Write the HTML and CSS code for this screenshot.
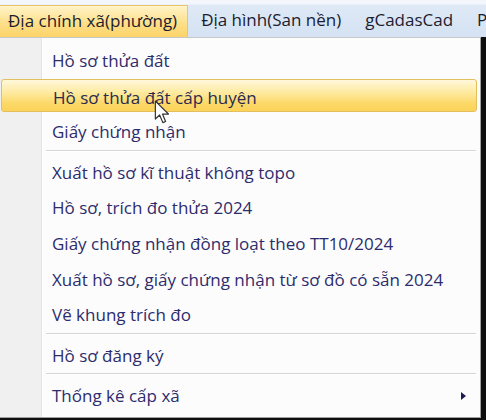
FILE: index.html
```html
<!DOCTYPE html>
<html lang="vi">
<head>
    <meta charset="UTF-8">
    <title>Menu Địa chính xã</title>
    <link rel="stylesheet" href="styles.css">
</head>
<body>
    <div class="menubar">
        <span class="bar-item open">Địa chính xã(phường)</span>
        <span class="bar-item">Địa hình(San nền)</span>
        <span class="bar-item">gCadasCad</span>
        <span class="bar-item">P</span>
    </div>

    <div class="dropdown">
        <ul class="menu">
            <li class="item">Hồ sơ thửa đất</li>
            <li class="item hover">Hồ sơ thửa đất cấp huyện</li>
            <li class="item">Giấy chứng nhận</li>
            <li class="sep"></li>
            <li class="item">Xuất hồ sơ kĩ thuật không topo</li>
            <li class="item">Hồ sơ, trích đo thửa 2024</li>
            <li class="item">Giấy chứng nhận đồng loạt theo TT10/2024</li>
            <li class="item">Xuất hồ sơ, giấy chứng nhận từ sơ đồ có sẵn 2024</li>
            <li class="item">Vẽ khung trích đo</li>
            <li class="sep"></li>
            <li class="item">Hồ sơ đăng ký</li>
            <li class="sep"></li>
            <li class="item sub">Thống kê cấp xã <span class="arrow"></span></li>
        </ul>
        <!-- mouse pointer over the hovered row -->
        <svg class="cursor" width="17" height="25" viewBox="0 0 14 21">
            <path d="M1 1 L1 16 L4.6 12.6 L7.3 19 L9.6 18 L7 11.8 L12 11.8 Z" fill="#fff" stroke="#333" stroke-width="1" stroke-linejoin="round"/>
        </svg>
    </div>
</body>
</html>
```

FILE: styles.css
```css
body {
    margin: 0;
    padding: 0;
    width: 486px;
    height: 420px;
    overflow: hidden;
    background: #0e0e0e;
    font-family: 'Open Sans', 'Noto Sans', sans-serif;
    font-size: 17px;
}

/* Menu bar */
.menubar {
    height: 37px;
    display: flex;
    align-items: flex-end;
    background: linear-gradient(#f3f7fc 0, #f3f7fc 4px, #dfe9f6 5px, #d4e2f3 100%);
    white-space: nowrap;
    overflow: hidden;
}

.bar-item {
    height: 32px;
    line-height: 30px;
    padding: 0 11px 0 13px;
    box-sizing: border-box;
    color: #1c1c2e;
}

.bar-item.open {
    padding: 0 10px 0 8px;
    background: linear-gradient(#fff3c8, #fee08a 55%, #fbd368);
    border: 1px solid #eac66a;
    border-bottom: none;
    border-left: none;
}

/* Dropdown */
.dropdown {
    position: relative;
    width: 481px;
    background: #fcfcfc;
    border: 1px solid #a0a0a0;
    border-left: none;
    border-top-color: #c8c8c8;
    box-sizing: border-box;
}

.menu {
    list-style: none;
    margin: 0;
    padding: 4px 0 4px;
    background: linear-gradient(90deg, #f0f0f0 0, #f0f0f0 41px, #e2e3e3 41px, #e2e3e3 42px, #ffffff 42px, #ffffff 43px, transparent 43px);
}

.item {
    position: relative;
    height: 35.6px;
    line-height: 38px;
    padding-left: 52px;
    color: #2d2c6c;
    white-space: nowrap;
}

.item.hover {
    margin: 1px 3px 1px 1px;
    padding-left: 51px;
    height: 33.6px;
    line-height: 36px;
    border: 1px solid #e3bf5e;
    border-radius: 3px;
    box-sizing: border-box;
    background: linear-gradient(#fff8da, #fee899 45%, #fcd868 75%, #fbd35a);
    color: #2a2a50;
}

.sep {
    height: 4px;
    margin-left: 46px;
    margin-right: 4px;
}

.sep::before {
    content: "";
    display: block;
    margin-top: 1px;
    height: 1px;
    background: #d6d6d6;
    border-bottom: 1px solid #ffffff;
}

.arrow {
    position: absolute;
    right: 14px;
    top: 15px;
    width: 0;
    height: 0;
    border-top: 4px solid transparent;
    border-bottom: 4px solid transparent;
    border-left: 5px solid #1c1c50;
}

.cursor {
    position: absolute;
    left: 154px;
    top: 62px;
}
```
